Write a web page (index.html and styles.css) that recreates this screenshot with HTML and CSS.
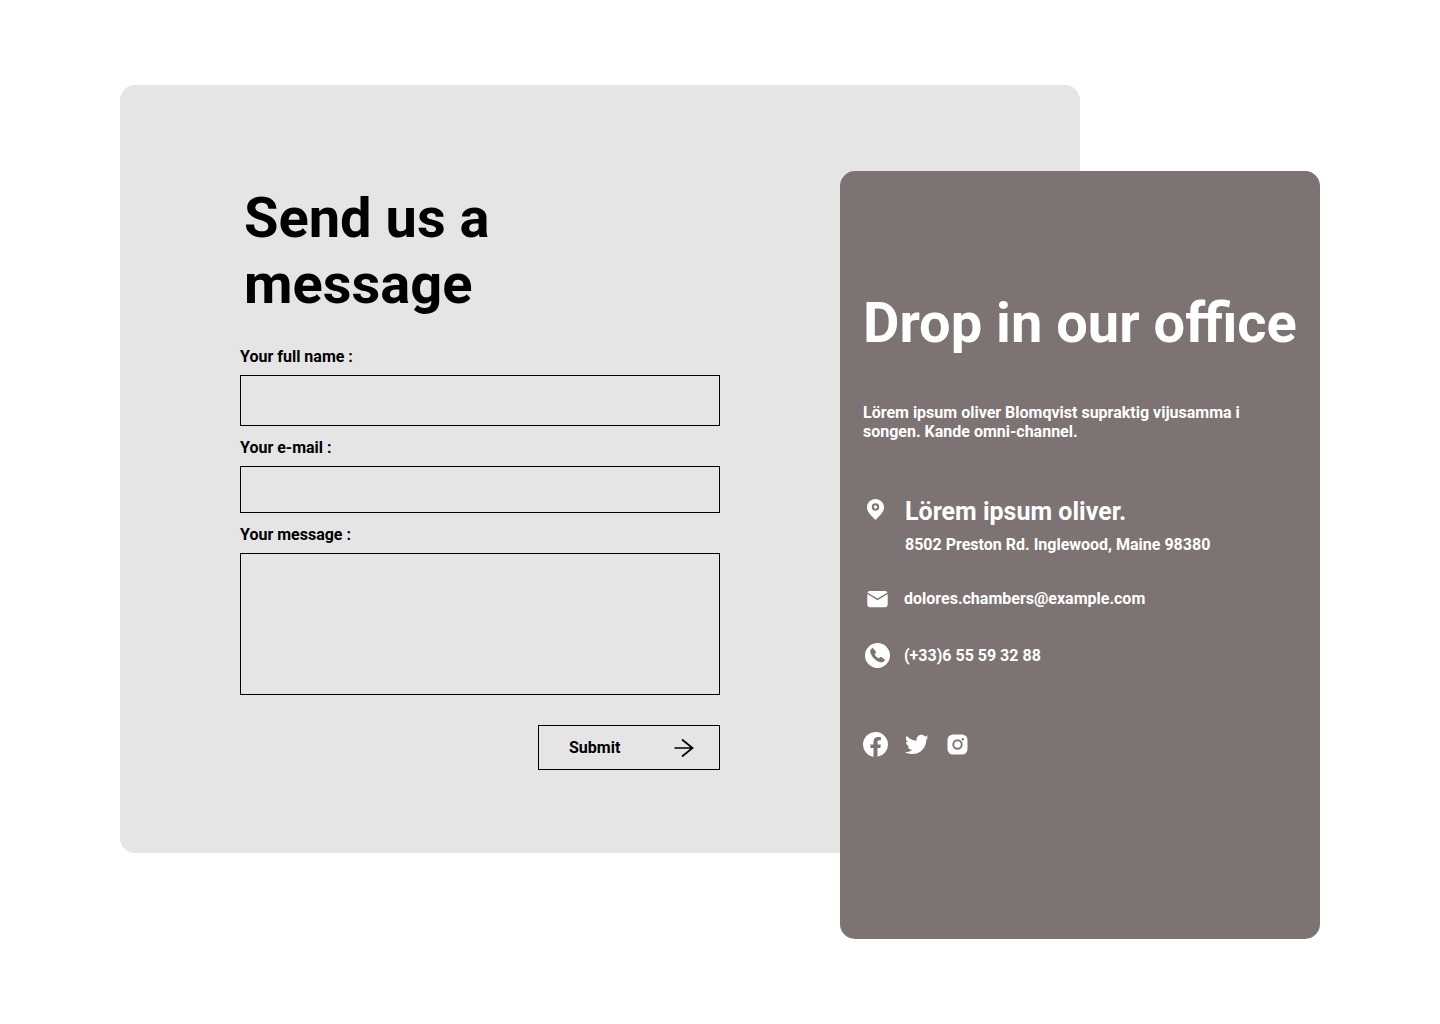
FILE: index.html
```html
<!DOCTYPE html>
<html lang="en">
<head>
<meta charset="utf-8">
<meta name="viewport" content="width=device-width, initial-scale=1">
<title>Contact us</title>
<link rel="stylesheet" href="styles.css">
</head>
<body>
<main class="contact">
  <section class="message-panel">
    <form class="message-form">
      <h1 class="heading form-heading">Send us a message</h1>
      <div class="field">
        <label for="name">Your full name :</label>
        <input class="control name-control" id="name" name="name" type="text">
      </div>
      <div class="field">
        <label for="email">Your e-mail :</label>
        <input class="control email-control" id="email" name="email" type="email">
      </div>
      <div class="field">
        <label for="message">Your message :</label>
        <textarea class="control message-control" id="message" name="message"></textarea>
      </div>
      <button class="submit" type="submit">
        <span>Submit</span>
        <svg class="arrow" viewBox="0 0 20 20" aria-hidden="true"><path d="M0.5 10H18.5M8 1.5L18.5 10L8 18.5" fill="none" stroke="currentColor" stroke-width="1.7"/></svg>
      </button>
    </form>
  </section>
  <section class="office-panel">
    <h2 class="heading">Drop in our office</h2>
    <p class="intro">Lörem ipsum oliver Blomqvist supraktig vijusamma i songen. Kande omni-channel.</p>
    <address class="details">
      <div class="place">
        <svg class="icon" viewBox="0 0 25 25" aria-hidden="true"><path fill="currentColor" fill-rule="evenodd" d="M12.5 2C7.8 2 4 5.7 4 10.3C4 15.7 9.3 19.2 12.5 23C15.7 19.2 21 15.7 21 10.3C21 5.7 17.2 2 12.5 2ZM12.5 6.3a3.7 3.7 0 1 1 0 7.4a3.7 3.7 0 0 1 0-7.4ZM12.5 8.3a1.7 1.7 0 1 0 0 3.4a1.7 1.7 0 0 0 0-3.4Z"/></svg>
        <div class="place-text">
          <h3 class="place-name">Lörem ipsum oliver.</h3>
          <p class="street">8502 Preston Rd. Inglewood, Maine 98380</p>
        </div>
      </div>
      <div class="line">
        <svg class="icon" viewBox="0 0 25 25" aria-hidden="true"><path fill="currentColor" d="M4.8 4.9H20.2A2.5 2.5 0 0 1 22.6 6.6L12.5 12.6L2.4 6.6A2.5 2.5 0 0 1 4.8 4.9ZM2.3 8.1L12.5 14.2L22.7 8.1V18.8A2.4 2.4 0 0 1 20.3 21.2H4.7A2.4 2.4 0 0 1 2.3 18.8Z"/></svg>
        <a class="link" href="mailto:dolores.chambers@example.com">dolores.chambers@example.com</a>
      </div>
      <div class="line">
        <svg class="icon" viewBox="0 0 25 25" aria-hidden="true"><path fill="currentColor" fill-rule="evenodd" d="M12.5 0a12.5 12.5 0 1 0 0 25a12.5 12.5 0 0 0 0-25ZM8.3 5.4L10.7 8.4C11.2 9.1 11 9.8 10.5 10.3L9.6 11.3C10.2 12.8 12 14.6 13.6 15.4L14.7 14.4C15.2 13.9 15.9 13.8 16.5 14.2L19.5 16.3C20 16.7 20 17.2 19.7 17.6C18.8 19 17.2 19.7 15.6 19.3C10.7 18 6.5 13.9 5.3 8.9C5 7.4 5.8 6 7.1 5.2C7.5 4.9 8 5 8.3 5.4Z"/></svg>
        <a class="link" href="tel:+33655593288">(+33)6 55 59 32 88</a>
      </div>
    </address>
    <nav class="social" aria-label="Social media">
      <a class="social-link" href="#" aria-label="Facebook"><svg class="icon" viewBox="0 0 25 25" aria-hidden="true"><path fill="currentColor" d="M25 12.5a12.5 12.5 0 1 0-14.5 12.35V16.1H7.4V12.5H10.5V9.8C10.5 6.7 12.3 5 15.2 5C16.5 5 17.9 5.2 17.9 5.2V8.3H16.4C14.9 8.3 14.5 9.2 14.5 10.2V12.5H17.8L17.3 16.1H14.5V24.85A12.5 12.5 0 0 0 25 12.5Z"/></svg></a>
      <a class="social-link" href="#" aria-label="Twitter"><svg class="icon" viewBox="0 0 24 24" aria-hidden="true"><path fill="currentColor" d="M23.643 4.937c-.835.37-1.732.62-2.675.733.962-.576 1.7-1.49 2.048-2.578-.9.534-1.897.922-2.958 1.13-.85-.904-2.06-1.47-3.4-1.47-2.572 0-4.658 2.086-4.658 4.66 0 .364.042.718.12 1.06-3.873-.195-7.304-2.05-9.602-4.868-.4.69-.63 1.49-.63 2.342 0 1.616.823 3.043 2.072 3.878-.764-.025-1.482-.234-2.11-.583v.06c0 2.257 1.605 4.14 3.737 4.568-.392.106-.803.162-1.227.162-.3 0-.593-.028-.877-.082.593 1.85 2.313 3.198 4.352 3.234-1.595 1.25-3.604 1.995-5.786 1.995-.376 0-.747-.022-1.112-.065 2.062 1.323 4.51 2.093 7.14 2.093 8.57 0 13.255-7.098 13.255-13.254 0-.2-.005-.402-.014-.602.91-.658 1.7-1.477 2.323-2.41z"/></svg></a>
      <a class="social-link" href="#" aria-label="Instagram"><svg class="icon" viewBox="0 0 25 25" aria-hidden="true"><path fill="currentColor" fill-rule="evenodd" d="M7.8 2.5H17.2A5.3 5.3 0 0 1 22.5 7.8V17.2A5.3 5.3 0 0 1 17.2 22.5H7.8A5.3 5.3 0 0 1 2.5 17.2V7.8A5.3 5.3 0 0 1 7.8 2.5ZM12.5 7.3a5.2 5.2 0 1 0 0 10.4a5.2 5.2 0 0 0 0-10.4ZM12.5 9.2a3.3 3.3 0 1 1 0 6.6a3.3 3.3 0 0 1 0-6.6ZM17.8 6a1.2 1.2 0 1 0 0 2.4a1.2 1.2 0 0 0 0-2.4Z"/></svg></a>
    </nav>
  </section>
</main>
</body>
</html>
```

FILE: styles.css
```css
* {
  box-sizing: border-box;
}

body {
  margin: 0;
  background: #fff;
  color: #000;
  font: 700 16px/19px Roboto, sans-serif;
}

h1, h2, h3, p {
  margin: 0;
}

/* The two panels share the fourth column, so the office overlaps the form. */
.contact {
  display: grid;
  grid-template-columns: repeat(5, 1fr);
  padding: 85px 120px;
}

.message-panel {
  grid-area: 1 / 1 / 2 / 5;
  margin-bottom: 86px;
  padding: 100px 37.5% 83px 12.5%;
  border-radius: 15px;
  background: #e5e5e5;
}

.office-panel {
  grid-area: 1 / 4 / 2 / 6;
  margin-top: 86px;
  padding: 119px 23px 182px;
  border-radius: 15px;
  background: #7d7373;
  color: #fff;
}

.heading {
  font-size: 56px;
  line-height: 66px;
}

.message-form {
  display: flex;
  flex-direction: column;
  gap: 12px;
}

.form-heading {
  max-width: 300px;
  margin-bottom: 18px;
  padding-left: 4px;
}

.field {
  display: flex;
  flex-direction: column;
  gap: 9px;
}

.control {
  width: 100%;
  padding: 8px 12px;
  border: 1px solid #000;
  border-radius: 0;
  background: transparent;
  color: inherit;
  font: inherit;
}

.name-control {
  height: 51px;
}

.email-control {
  height: 47px;
}

.message-control {
  height: 142px;
  resize: none;
}

.submit {
  display: flex;
  align-items: center;
  justify-content: space-between;
  align-self: flex-end;
  width: 182px;
  height: 45px;
  margin-top: 18px;
  padding: 0 25px 0 30px;
  border: 1px solid #000;
  background: transparent;
  color: inherit;
  font: inherit;
}

.arrow {
  width: 20px;
  height: 20px;
}

.intro {
  max-width: 400px;
  margin-top: 47px;
}

.details {
  display: flex;
  flex-direction: column;
  gap: 32px;
  margin-top: 56px;
  font-style: normal;
}

.icon {
  display: block;
  flex: none;
  width: 25px;
  height: 25px;
}

.place {
  display: flex;
  gap: 17px;
}

.place-text {
  display: grid;
  gap: 9px;
}

.place-name {
  font-size: 25px;
  line-height: 29px;
}

.line {
  display: flex;
  align-items: center;
  gap: 14px;
  padding-left: 2px;
}

.link {
  color: inherit;
  text-decoration: none;
}

.social {
  display: flex;
  gap: 16px;
  margin-top: 64px;
}

.social-link {
  color: inherit;
}
```
